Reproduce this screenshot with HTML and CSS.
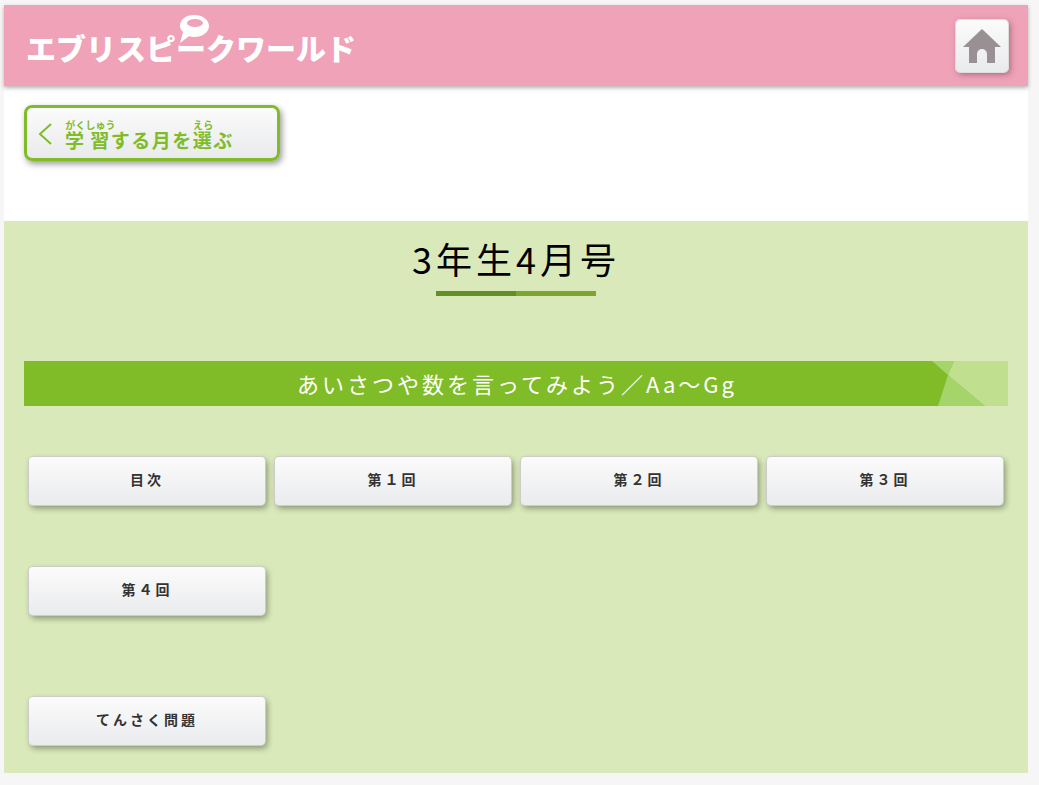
FILE: index.html
```html
<!DOCTYPE html>
<html lang="ja">
    <head>
        <meta charset="UTF-8">
        <meta name="viewport" content="width=device-width, initial-scale=1.0">
        <title>3年生4月号</title>
        <link rel="stylesheet" href="styles.css">
    </head>
    <body>
        <div class="page">
            <header class="site-header">
                <div class="logo">
                    <span class="logo-text">エブリスピークワールド</span>
                    <svg class="logo-bubble" width="38" height="34" viewBox="0 0 38 34">
                        <path d="M19 2c8.500 0 15 4.800 15 11s-6.500 11-15 11c-1.800 0-3.500-.2-5-.7L5 30l3-11c-1.900-1.800-3-3.800-3-6C5 6.800 10.500 2 19 2z" fill="#fff"/>
                        <ellipse cx="20" cy="10" rx="8" ry="4" fill="#efa2b8"/>
                    </svg>
                </div>
                <a class="home-button" href="#">
                    <svg width="40" height="36" viewBox="0 0 40 36">
                        <path d="M20 1 39 19H33V35H25V26a5 5 0 0 0-10 0V35H7V19H1Z" fill="#989092"/>
                    </svg>
                </a>
            </header>

            <div class="back-area">
                <a class="back-button" href="#">
                    <svg class="back-arrow" width="16" height="24" viewBox="0 0 16 24">
                        <path d="M14 2 3 12l11 10" fill="none" stroke="#7fbc27" stroke-width="2"/>
                    </svg>
                    <span class="back-label"><ruby>学<rt>がく</rt></ruby><ruby>習<rt>しゅう</rt></ruby>する月を<ruby>選<rt>えら</rt></ruby>ぶ</span>
                </a>
            </div>

            <main class="content">
                <h1 class="issue-title">3年生4月号</h1>
                <div class="title-line"></div>

                <div class="band">
                    <span class="band-text">あいさつや数を言ってみよう／Aa～Gg</span>
                    <svg class="band-deco" width="76" height="45" viewBox="0 0 76 45">
                        <path d="M0 0H22L16 14Z" fill="#a5d46a"/>
                        <path d="M16 14 53 45H6Z" fill="#a5d46a"/>
                        <path d="M22 0H76V45H53L16 14Z" fill="#c0e090"/>
                    </svg>
                </div>

                <div class="lesson-grid">
                    <a class="lesson-button" href="#">目次</a>
                    <a class="lesson-button" href="#">第１回</a>
                    <a class="lesson-button" href="#">第２回</a>
                    <a class="lesson-button" href="#">第３回</a>
                    <a class="lesson-button" href="#">第４回</a>
                </div>
                <div class="lesson-grid extra">
                    <a class="lesson-button" href="#">てんさく問題</a>
                </div>
            </main>
        </div>
    </body>
</html>
```

FILE: styles.css
```css
* {
    box-sizing: border-box;
}

body {
    margin: 0;
    background-color: #f6f6f6;
    font-family: "Noto Sans CJK JP", "Noto Sans", sans-serif;
    overflow: hidden;
}

a {
    text-decoration: none;
}

.page {
    width: 1024px;
    height: 768px;
    margin: 5px 0 0 4px;
    background-color: #fff;
    display: flex;
    flex-direction: column;
}

.site-header {
    height: 81px;
    flex: none;
    background-color: #efa2b8;
    box-shadow: 0 2px 4px rgba(0, 0, 0, .3);
    display: flex;
    align-items: center;
    justify-content: space-between;
    padding: 0 20px 3px 22px;
    position: relative;
}

.logo {
    position: relative;
    padding-top: 6px;
}

.logo-text {
    color: #fff;
    font-size: 30px;
    font-weight: 900;
    line-height: 40px;
    white-space: nowrap;
}

.logo-bubble {
    position: absolute;
    left: 149px;
    top: -8px;
}

.home-button {
    width: 52px;
    height: 52px;
    border-radius: 4px;
    background: linear-gradient(#fbfbfb, #e9eaec);
    box-shadow: 0 0 0 1px #ddd, 2px 2px 6px rgba(90, 50, 60, .55);
    display: flex;
    align-items: center;
    justify-content: center;
    margin-top: 3px;
}

.back-area {
    height: 135px;
    flex: none;
    padding: 19px 20px 0;
}

.back-button {
    width: 256px;
    height: 56px;
    border: 3px solid #7fbc27;
    border-radius: 8px;
    background: linear-gradient(#fbfbfb, #e9eaec);
    box-shadow: 2px 3px 6px rgba(0, 0, 0, .4);
    display: flex;
    align-items: center;
    padding: 0 0 0 10px;
}

.back-arrow {
    flex: none;
    margin-top: 2px;
}

.back-label {
    margin-left: 12px;
    color: #7fbc27;
    font-size: 19px;
    font-weight: 700;
    letter-spacing: 1.500px;
    white-space: nowrap;
    line-height: 24px;
    margin-top: 6px;
}

.back-label rt {
    font-size: 10px;
    letter-spacing: 0;
    line-height: 10px;
}

.content {
    flex: 1;
    background-color: #d9e9b9;
    padding: 0 20px;
}

.issue-title {
    margin: 0;
    padding-top: 10px;
    height: 70px;
    text-align: center;
    color: #000;
    font-size: 36px;
    font-weight: 400;
    letter-spacing: 4px;
    line-height: 54px;
}

.title-line {
    width: 160px;
    height: 5px;
    margin: 0 auto 65px;
    background: linear-gradient(90deg, #628f27 50%, #7ea52f 50%);
}

.band {
    height: 45px;
    background-color: #7fbc27;
    position: relative;
    display: flex;
    align-items: center;
    justify-content: center;
    margin-bottom: 51px;
}

.band-text {
    color: #fff;
    font-size: 22px;
    letter-spacing: 3px;
    line-height: 45px;
    position: relative;
    left: 1px;
}

.band-deco {
    position: absolute;
    right: 0;
    top: 0;
}

.lesson-grid {
    display: grid;
    grid-template-columns: repeat(4, 236px);
    column-gap: 10px;
    row-gap: 62px;
    padding-left: 5px;
}

.lesson-grid.extra {
    margin-top: 82px;
}

.lesson-button {
    height: 48px;
    border-radius: 4px;
    background: linear-gradient(#fbfbfb, #eaebed);
    box-shadow: 0 0 0 1px #ccc, 2px 3px 6px rgba(0, 0, 0, .4);
    display: flex;
    align-items: center;
    justify-content: center;
    color: #333;
    font-size: 14px;
    font-weight: 700;
    letter-spacing: 3px;
    padding-bottom: 4px;
}
```
